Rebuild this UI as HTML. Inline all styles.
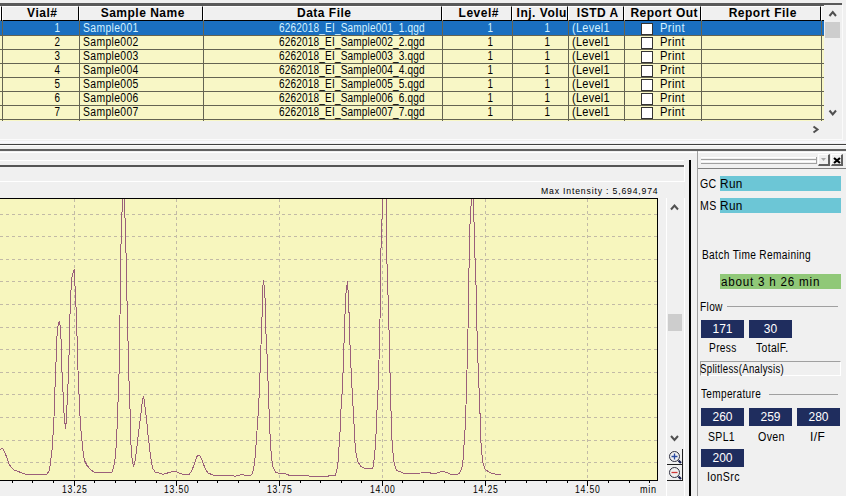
<!DOCTYPE html><html><head><meta charset="utf-8"><style>
*{margin:0;padding:0;box-sizing:border-box}
html,body{width:846px;height:496px;overflow:hidden;background:#f0f0f0;font-family:"Liberation Sans",sans-serif;font-size:12px;color:#000}
.abs{position:absolute}
.t{position:absolute;white-space:pre;line-height:14px}
.hd{position:absolute;top:6px;height:15px;background:#f0f0f0;border-left:1px solid #fff;border-top:1px solid #fff;border-right:1px solid #000;border-bottom:1px solid #000;font-weight:bold;text-align:center;line-height:12px;white-space:pre;overflow:hidden;letter-spacing:0.5px;text-indent:3.5px}
.row{position:absolute;left:0;width:823px;height:14px}
.vl{position:absolute;width:1px;background:#646452}
.hl{position:absolute;height:1px;background:#646452}
.navy{position:absolute;background:#1f2d5e;color:#fff;text-align:center;line-height:18px;height:18px;width:43px}
.lbl{position:absolute;white-space:pre;text-align:center}
</style></head><body>

<div class="abs" style="left:0;top:0;width:842px;height:3px;background:#f0f0f0"></div>
<div class="abs" style="left:0;top:3px;width:842px;height:3px;background:#5a5a5a"></div>
<div class="hd" style="left:0px;width:2px"></div>
<div class="hd" style="left:2px;width:77px">Vial#</div>
<div class="hd" style="left:79px;width:124px">Sample Name</div>
<div class="hd" style="left:203px;width:239px">Data File</div>
<div class="hd" style="left:442px;width:70px">Level#</div>
<div class="hd" style="left:512px;width:56px">Inj. Volu</div>
<div class="hd" style="left:568px;width:56px">ISTD A</div>
<div class="hd" style="left:624px;width:77px">Report Out</div>
<div class="hd" style="left:701px;width:120px">Report File</div>
<div class="abs" style="left:821px;top:6px;width:3px;height:15px;background:#f0f0f0;border-left:1px solid #fff;border-top:1px solid #fff;border-bottom:1px solid #000"></div>
<div class="abs" style="left:0;top:21px;width:824px;height:14px;background:#1a6fc0"></div>
<div class="abs" style="left:0;top:35px;width:824px;height:86px;background:#f8f7c6"></div>
<div class="hl" style="left:0;top:35px;width:824px"></div>
<div class="hl" style="left:0;top:49px;width:824px"></div>
<div class="hl" style="left:0;top:63px;width:824px"></div>
<div class="hl" style="left:0;top:77px;width:824px"></div>
<div class="hl" style="left:0;top:91px;width:824px"></div>
<div class="hl" style="left:0;top:105px;width:824px"></div>
<div class="hl" style="left:0;top:119px;width:824px"></div>
<div class="vl" style="left:2px;top:21px;height:100px"></div>
<div class="vl" style="left:79px;top:21px;height:100px"></div>
<div class="vl" style="left:203px;top:21px;height:100px"></div>
<div class="vl" style="left:442px;top:21px;height:100px"></div>
<div class="vl" style="left:512px;top:21px;height:100px"></div>
<div class="vl" style="left:568px;top:21px;height:100px"></div>
<div class="vl" style="left:624px;top:21px;height:100px"></div>
<div class="vl" style="left:701px;top:21px;height:100px"></div>
<div class="vl" style="left:821px;top:21px;height:100px"></div>
<div class="t" style="left:0;width:60px;text-align:right;top:21px;color:#d4f2ff;transform:scaleX(0.82);transform-origin:59.5px 0">1</div>
<div class="t" style="left:82.63px;top:21px;color:#d4f2ff;font-size:12px;font-weight:400;letter-spacing:0.4px;transform:scaleX(0.8651);transform-origin:0 0;">Sample001</div>
<div class="t" style="left:278.76px;top:21px;color:#d4f2ff;font-size:12px;font-weight:400;letter-spacing:0.2px;transform:scaleX(0.8378);transform-origin:0 0;">6262018_EI_Sample001_1.qgd</div>
<div class="t" style="left:441px;width:52px;text-align:right;top:21px;color:#d4f2ff;transform:scaleX(0.82);transform-origin:51.5px 0">1</div>
<div class="t" style="left:512px;width:38px;text-align:right;top:21px;color:#d4f2ff;transform:scaleX(0.82);transform-origin:37.5px 0">1</div>
<div class="t" style="left:572.09px;top:21px;color:#d4f2ff;font-size:12px;font-weight:400;letter-spacing:0.3px;transform:scaleX(0.9125);transform-origin:0 0;">(Level1</div>
<div class="abs" style="left:641px;top:23px;width:12px;height:12px;background:#fff;border:1px solid #333"></div>
<div class="t" style="left:659.67px;top:21px;color:#d4f2ff;font-size:12px;font-weight:400;letter-spacing:0.4px;transform:scaleX(0.9320);transform-origin:0 0;">Print</div>
<div class="t" style="left:0;width:60px;text-align:right;top:35px;color:#000;transform:scaleX(0.82);transform-origin:59.5px 0">2</div>
<div class="t" style="left:82.63px;top:35px;color:#000;font-size:12px;font-weight:400;letter-spacing:0.4px;transform:scaleX(0.8651);transform-origin:0 0;">Sample002</div>
<div class="t" style="left:278.76px;top:35px;color:#000;font-size:12px;font-weight:400;letter-spacing:0.2px;transform:scaleX(0.8378);transform-origin:0 0;">6262018_EI_Sample002_2.qgd</div>
<div class="t" style="left:441px;width:52px;text-align:right;top:35px;color:#000;transform:scaleX(0.82);transform-origin:51.5px 0">1</div>
<div class="t" style="left:512px;width:38px;text-align:right;top:35px;color:#000;transform:scaleX(0.82);transform-origin:37.5px 0">1</div>
<div class="t" style="left:572.09px;top:35px;color:#000;font-size:12px;font-weight:400;letter-spacing:0.3px;transform:scaleX(0.9125);transform-origin:0 0;">(Level1</div>
<div class="abs" style="left:641px;top:37px;width:12px;height:12px;background:#fff;border:1px solid #333"></div>
<div class="t" style="left:659.67px;top:35px;color:#000;font-size:12px;font-weight:400;letter-spacing:0.4px;transform:scaleX(0.9320);transform-origin:0 0;">Print</div>
<div class="t" style="left:0;width:60px;text-align:right;top:49px;color:#000;transform:scaleX(0.82);transform-origin:59.5px 0">3</div>
<div class="t" style="left:82.63px;top:49px;color:#000;font-size:12px;font-weight:400;letter-spacing:0.4px;transform:scaleX(0.8651);transform-origin:0 0;">Sample003</div>
<div class="t" style="left:278.76px;top:49px;color:#000;font-size:12px;font-weight:400;letter-spacing:0.2px;transform:scaleX(0.8378);transform-origin:0 0;">6262018_EI_Sample003_3.qgd</div>
<div class="t" style="left:441px;width:52px;text-align:right;top:49px;color:#000;transform:scaleX(0.82);transform-origin:51.5px 0">1</div>
<div class="t" style="left:512px;width:38px;text-align:right;top:49px;color:#000;transform:scaleX(0.82);transform-origin:37.5px 0">1</div>
<div class="t" style="left:572.09px;top:49px;color:#000;font-size:12px;font-weight:400;letter-spacing:0.3px;transform:scaleX(0.9125);transform-origin:0 0;">(Level1</div>
<div class="abs" style="left:641px;top:51px;width:12px;height:12px;background:#fff;border:1px solid #333"></div>
<div class="t" style="left:659.67px;top:49px;color:#000;font-size:12px;font-weight:400;letter-spacing:0.4px;transform:scaleX(0.9320);transform-origin:0 0;">Print</div>
<div class="t" style="left:0;width:60px;text-align:right;top:63px;color:#000;transform:scaleX(0.82);transform-origin:59.5px 0">4</div>
<div class="t" style="left:82.63px;top:63px;color:#000;font-size:12px;font-weight:400;letter-spacing:0.4px;transform:scaleX(0.8651);transform-origin:0 0;">Sample004</div>
<div class="t" style="left:278.76px;top:63px;color:#000;font-size:12px;font-weight:400;letter-spacing:0.2px;transform:scaleX(0.8378);transform-origin:0 0;">6262018_EI_Sample004_4.qgd</div>
<div class="t" style="left:441px;width:52px;text-align:right;top:63px;color:#000;transform:scaleX(0.82);transform-origin:51.5px 0">1</div>
<div class="t" style="left:512px;width:38px;text-align:right;top:63px;color:#000;transform:scaleX(0.82);transform-origin:37.5px 0">1</div>
<div class="t" style="left:572.09px;top:63px;color:#000;font-size:12px;font-weight:400;letter-spacing:0.3px;transform:scaleX(0.9125);transform-origin:0 0;">(Level1</div>
<div class="abs" style="left:641px;top:65px;width:12px;height:12px;background:#fff;border:1px solid #333"></div>
<div class="t" style="left:659.67px;top:63px;color:#000;font-size:12px;font-weight:400;letter-spacing:0.4px;transform:scaleX(0.9320);transform-origin:0 0;">Print</div>
<div class="t" style="left:0;width:60px;text-align:right;top:77px;color:#000;transform:scaleX(0.82);transform-origin:59.5px 0">5</div>
<div class="t" style="left:82.63px;top:77px;color:#000;font-size:12px;font-weight:400;letter-spacing:0.4px;transform:scaleX(0.8651);transform-origin:0 0;">Sample005</div>
<div class="t" style="left:278.76px;top:77px;color:#000;font-size:12px;font-weight:400;letter-spacing:0.2px;transform:scaleX(0.8378);transform-origin:0 0;">6262018_EI_Sample005_5.qgd</div>
<div class="t" style="left:441px;width:52px;text-align:right;top:77px;color:#000;transform:scaleX(0.82);transform-origin:51.5px 0">1</div>
<div class="t" style="left:512px;width:38px;text-align:right;top:77px;color:#000;transform:scaleX(0.82);transform-origin:37.5px 0">1</div>
<div class="t" style="left:572.09px;top:77px;color:#000;font-size:12px;font-weight:400;letter-spacing:0.3px;transform:scaleX(0.9125);transform-origin:0 0;">(Level1</div>
<div class="abs" style="left:641px;top:79px;width:12px;height:12px;background:#fff;border:1px solid #333"></div>
<div class="t" style="left:659.67px;top:77px;color:#000;font-size:12px;font-weight:400;letter-spacing:0.4px;transform:scaleX(0.9320);transform-origin:0 0;">Print</div>
<div class="t" style="left:0;width:60px;text-align:right;top:91px;color:#000;transform:scaleX(0.82);transform-origin:59.5px 0">6</div>
<div class="t" style="left:82.63px;top:91px;color:#000;font-size:12px;font-weight:400;letter-spacing:0.4px;transform:scaleX(0.8651);transform-origin:0 0;">Sample006</div>
<div class="t" style="left:278.76px;top:91px;color:#000;font-size:12px;font-weight:400;letter-spacing:0.2px;transform:scaleX(0.8378);transform-origin:0 0;">6262018_EI_Sample006_6.qgd</div>
<div class="t" style="left:441px;width:52px;text-align:right;top:91px;color:#000;transform:scaleX(0.82);transform-origin:51.5px 0">1</div>
<div class="t" style="left:512px;width:38px;text-align:right;top:91px;color:#000;transform:scaleX(0.82);transform-origin:37.5px 0">1</div>
<div class="t" style="left:572.09px;top:91px;color:#000;font-size:12px;font-weight:400;letter-spacing:0.3px;transform:scaleX(0.9125);transform-origin:0 0;">(Level1</div>
<div class="abs" style="left:641px;top:93px;width:12px;height:12px;background:#fff;border:1px solid #333"></div>
<div class="t" style="left:659.67px;top:91px;color:#000;font-size:12px;font-weight:400;letter-spacing:0.4px;transform:scaleX(0.9320);transform-origin:0 0;">Print</div>
<div class="t" style="left:0;width:60px;text-align:right;top:105px;color:#000;transform:scaleX(0.82);transform-origin:59.5px 0">7</div>
<div class="t" style="left:82.63px;top:105px;color:#000;font-size:12px;font-weight:400;letter-spacing:0.4px;transform:scaleX(0.8651);transform-origin:0 0;">Sample007</div>
<div class="t" style="left:278.76px;top:105px;color:#000;font-size:12px;font-weight:400;letter-spacing:0.2px;transform:scaleX(0.8378);transform-origin:0 0;">6262018_EI_Sample007_7.qgd</div>
<div class="t" style="left:441px;width:52px;text-align:right;top:105px;color:#000;transform:scaleX(0.82);transform-origin:51.5px 0">1</div>
<div class="t" style="left:512px;width:38px;text-align:right;top:105px;color:#000;transform:scaleX(0.82);transform-origin:37.5px 0">1</div>
<div class="t" style="left:572.09px;top:105px;color:#000;font-size:12px;font-weight:400;letter-spacing:0.3px;transform:scaleX(0.9125);transform-origin:0 0;">(Level1</div>
<div class="abs" style="left:641px;top:107px;width:12px;height:12px;background:#fff;border:1px solid #333"></div>
<div class="t" style="left:659.67px;top:105px;color:#000;font-size:12px;font-weight:400;letter-spacing:0.4px;transform:scaleX(0.9320);transform-origin:0 0;">Print</div>
<div class="abs" style="left:824px;top:5px;width:18px;height:116px;background:#f0f0f0"></div>
<div class="abs" style="left:825px;top:22px;width:15px;height:16px;background:#cdcdcd"></div>
<svg class="abs" style="left:0;top:0" width="846" height="496"><polyline points="829.5,16 832.75,12 836,16" fill="none" stroke="#505050" stroke-width="2"/><polyline points="829.5,110.5 832.75,114.5 836,110.5" fill="none" stroke="#505050" stroke-width="2"/><polyline points="813.5,126.5 817.5,129.5 813.5,132.5" fill="none" stroke="#505050" stroke-width="2"/><polyline points="671,209.5 674.5,205.5 678,209.5" fill="none" stroke="#505050" stroke-width="2"/><polyline points="671,436 674.5,440 678,436" fill="none" stroke="#505050" stroke-width="2"/></svg>
<div class="abs" style="left:0;top:139px;width:843px;height:1px;background:#fbfbfb"></div>
<div class="abs" style="left:842px;top:5px;width:1px;height:135px;background:#fbfbfb"></div>
<div class="abs" style="left:0;top:141px;width:846px;height:2px;background:#f8f8fc"></div>
<div class="abs" style="left:0;top:145px;width:846px;height:1px;background:#fcfcfc"></div>
<div class="abs" style="left:0;top:144px;width:846px;height:1px;background:#404040"></div>
<div class="abs" style="left:0;top:149px;width:846px;height:2px;background:#606060"></div>
<div class="abs" style="left:0;top:152px;width:846px;height:1px;background:#fff"></div>
<div class="abs" style="left:0;top:160px;width:684px;height:1px;background:#fff"></div>
<div class="abs" style="left:0;top:165px;width:684px;height:2px;background:#555"></div>
<div class="abs" style="left:0;top:181px;width:684px;height:1px;background:#fff"></div>
<div class="abs" style="left:684px;top:165px;width:1px;height:17px;background:#fff"></div>
<div class="abs" style="left:689px;top:160px;width:2px;height:336px;background:#000"></div>
<div class="abs" style="left:697px;top:151px;width:1px;height:345px;background:#a0a0a0"></div>
<svg class="abs" style="left:0;top:0" width="846" height="496" viewBox="0 0 846 496"><rect x="0" y="198" width="658" height="283" fill="#f7f6be"/><line x1="0" y1="214.5" x2="657" y2="214.5" stroke="#c2baa6" stroke-width="1" stroke-dasharray="3 3" shape-rendering="crispEdges"/><line x1="0" y1="236.5" x2="657" y2="236.5" stroke="#c2baa6" stroke-width="1" stroke-dasharray="3 3" shape-rendering="crispEdges"/><line x1="0" y1="259.5" x2="657" y2="259.5" stroke="#c2baa6" stroke-width="1" stroke-dasharray="3 3" shape-rendering="crispEdges"/><line x1="0" y1="281.5" x2="657" y2="281.5" stroke="#c2baa6" stroke-width="1" stroke-dasharray="3 3" shape-rendering="crispEdges"/><line x1="0" y1="304.5" x2="657" y2="304.5" stroke="#c2baa6" stroke-width="1" stroke-dasharray="3 3" shape-rendering="crispEdges"/><line x1="0" y1="327.5" x2="657" y2="327.5" stroke="#c2baa6" stroke-width="1" stroke-dasharray="3 3" shape-rendering="crispEdges"/><line x1="0" y1="349.5" x2="657" y2="349.5" stroke="#c2baa6" stroke-width="1" stroke-dasharray="3 3" shape-rendering="crispEdges"/><line x1="0" y1="372.5" x2="657" y2="372.5" stroke="#c2baa6" stroke-width="1" stroke-dasharray="3 3" shape-rendering="crispEdges"/><line x1="0" y1="394.5" x2="657" y2="394.5" stroke="#c2baa6" stroke-width="1" stroke-dasharray="3 3" shape-rendering="crispEdges"/><line x1="0" y1="417.5" x2="657" y2="417.5" stroke="#c2baa6" stroke-width="1" stroke-dasharray="3 3" shape-rendering="crispEdges"/><line x1="0" y1="440.5" x2="657" y2="440.5" stroke="#c2baa6" stroke-width="1" stroke-dasharray="3 3" shape-rendering="crispEdges"/><line x1="0" y1="462.5" x2="657" y2="462.5" stroke="#c2baa6" stroke-width="1" stroke-dasharray="3 3" shape-rendering="crispEdges"/><line x1="74.5" y1="199" x2="74.5" y2="480" stroke="#c2baa6" stroke-width="1" stroke-dasharray="3 3" shape-rendering="crispEdges"/><line x1="176.5" y1="199" x2="176.5" y2="480" stroke="#c2baa6" stroke-width="1" stroke-dasharray="3 3" shape-rendering="crispEdges"/><line x1="279.5" y1="199" x2="279.5" y2="480" stroke="#c2baa6" stroke-width="1" stroke-dasharray="3 3" shape-rendering="crispEdges"/><line x1="382.5" y1="199" x2="382.5" y2="480" stroke="#c2baa6" stroke-width="1" stroke-dasharray="3 3" shape-rendering="crispEdges"/><line x1="485.5" y1="199" x2="485.5" y2="480" stroke="#c2baa6" stroke-width="1" stroke-dasharray="3 3" shape-rendering="crispEdges"/><line x1="587.5" y1="199" x2="587.5" y2="480" stroke="#c2baa6" stroke-width="1" stroke-dasharray="3 3" shape-rendering="crispEdges"/><polyline points="0,449.6 1.8,448.4 3,449 4.8,452.6 7.3,458.7 9.1,464 11.5,467.8 14.5,470.2 18.1,471.4 22.4,473.2 26.6,474.4 36.3,474.7 44.7,475 47.2,473.8 49,470.8 50.2,464.7 51,458 52,450 53,435 54,417 54.5,400 55.3,380 56.3,355 57.3,329 59.4,321 60.7,330 61.3,348 61.4,360 62.4,380 63.4,400 63.6,410 64.8,420 65.3,428.6 66.4,422 67.2,400 68.2,380 69.2,350 69.4,328 70.2,310 70.7,300 71.4,279 72.4,276 73.4,271.7 74.5,269.2 74.7,275 74.7,282 75.4,290 76.5,320 77.3,345 77.5,360 78.5,380 79.4,405 80.5,425 81.7,438 82.9,450 83.5,455 84.7,461 87.1,465.7 90.7,469.5 94.3,472.5 98,472.8 111.9,472.5 113.7,467 114.9,460 116.1,447 116.6,435 117.6,420 117.6,410 118.6,390 119.5,355 119.5,330 120.5,300 120.5,270 121.1,240 121.7,215 122.7,205 122.7,198 124.2,198 124.2,208 125.2,220 126.2,260 126.8,295 127.6,320 128.6,370 129.7,400 130.7,430 131,445 132.2,460 133.5,466.5 135.3,460 137.1,445 138.9,430 139.5,425 140.2,420 141.3,410 142.3,401.6 143.5,396 144.3,401 145.3,409 146.3,418 147.3,427 148,435 149.2,445 150.4,455 151.6,463 152.8,468.5 155.2,472 159.4,473 163,474.2 167.9,472.9 172.7,471.5 176.4,471.5 180,473.5 184.8,474.5 188.6,474.8 191,472 194.1,465 196.5,457 198.3,455 199.5,455 201.9,460 205,468 208,473 211.6,474.5 215.2,475.5 233.4,475.5 234.6,476.5 240.6,474.7 241.8,474.3 245.4,475.5 250.9,475.5 252.7,473 254.2,465 255.4,455 256.3,440 257.8,420 259.2,395 260.5,360 261.5,330 262.7,300 262.7,290 263.4,280 264.2,287 265,298 265,321 266.5,340 267.6,370 268.5,395 269.4,420 270.5,445 271.8,460 273,467 275.4,472 279,473.5 284.5,473.5 289.9,475.5 328,476.5 329.3,475.2 335.2,475.3 336.5,472 337.8,465 338.8,450 339.5,440 340.8,420 341.1,405 342.4,390 343.5,360 344.4,330 345.4,305 345.4,296 346.5,291 347.4,281.3 348,289.6 348.9,309 349.6,331 350,345 351.1,370 352.4,395 353.5,415 354.4,430 355.1,445 356.3,455 358.1,462 360.4,466 364.9,468.7 372.5,468.7 373.5,465 375,450 376.3,430 377,410 378.5,380 379.5,340 380.7,290 380.7,260 381.5,230 382.7,205 382.7,198 386.2,198 386.2,236 387.2,270 388.8,320 389.8,365 390.8,400 391.4,430 392.6,450 394.4,465 396.6,470 398.3,471 403.9,473.2 421.6,473 423.9,472.2 430.5,473 437.2,473 442.7,471.3 447.2,472.5 450.5,474.3 456,475 459.4,473 461.6,469 462.9,462 463.6,450 464.5,440 465.5,420 466.5,390 467.5,350 468.7,300 469.1,260 470.1,220 471.1,205 471.1,198 473.1,198 473.1,209 474.2,225 475.2,265 476.2,290 476.6,310 477.2,340 478.6,380 479.6,400 480.8,440 481.6,451 482.8,462.6 485.2,469.7 490.3,472.7 495.3,474.2 501.4,474.5" fill="none" stroke="#9a5f7a" stroke-width="1" shape-rendering="crispEdges"/><line x1="0" y1="198.5" x2="658" y2="198.5" stroke="#000" stroke-width="1"/><line x1="657.5" y1="198" x2="657.5" y2="481" stroke="#000" stroke-width="1"/><line x1="0" y1="480.5" x2="658" y2="480.5" stroke="#000" stroke-width="1"/><line x1="12.5" y1="480" x2="12.5" y2="483" stroke="#000" stroke-width="1" shape-rendering="crispEdges"/><line x1="32.5" y1="480" x2="32.5" y2="483" stroke="#000" stroke-width="1" shape-rendering="crispEdges"/><line x1="53.5" y1="480" x2="53.5" y2="483" stroke="#000" stroke-width="1" shape-rendering="crispEdges"/><line x1="74.5" y1="480" x2="74.5" y2="486" stroke="#000" stroke-width="1" shape-rendering="crispEdges"/><line x1="94.5" y1="480" x2="94.5" y2="483" stroke="#000" stroke-width="1" shape-rendering="crispEdges"/><line x1="115.5" y1="480" x2="115.5" y2="483" stroke="#000" stroke-width="1" shape-rendering="crispEdges"/><line x1="135.5" y1="480" x2="135.5" y2="483" stroke="#000" stroke-width="1" shape-rendering="crispEdges"/><line x1="156.5" y1="480" x2="156.5" y2="483" stroke="#000" stroke-width="1" shape-rendering="crispEdges"/><line x1="176.5" y1="480" x2="176.5" y2="486" stroke="#000" stroke-width="1" shape-rendering="crispEdges"/><line x1="197.5" y1="480" x2="197.5" y2="483" stroke="#000" stroke-width="1" shape-rendering="crispEdges"/><line x1="217.5" y1="480" x2="217.5" y2="483" stroke="#000" stroke-width="1" shape-rendering="crispEdges"/><line x1="238.5" y1="480" x2="238.5" y2="483" stroke="#000" stroke-width="1" shape-rendering="crispEdges"/><line x1="259.5" y1="480" x2="259.5" y2="483" stroke="#000" stroke-width="1" shape-rendering="crispEdges"/><line x1="279.5" y1="480" x2="279.5" y2="486" stroke="#000" stroke-width="1" shape-rendering="crispEdges"/><line x1="300.5" y1="480" x2="300.5" y2="483" stroke="#000" stroke-width="1" shape-rendering="crispEdges"/><line x1="320.5" y1="480" x2="320.5" y2="483" stroke="#000" stroke-width="1" shape-rendering="crispEdges"/><line x1="341.5" y1="480" x2="341.5" y2="483" stroke="#000" stroke-width="1" shape-rendering="crispEdges"/><line x1="361.5" y1="480" x2="361.5" y2="483" stroke="#000" stroke-width="1" shape-rendering="crispEdges"/><line x1="382.5" y1="480" x2="382.5" y2="486" stroke="#000" stroke-width="1" shape-rendering="crispEdges"/><line x1="402.5" y1="480" x2="402.5" y2="483" stroke="#000" stroke-width="1" shape-rendering="crispEdges"/><line x1="423.5" y1="480" x2="423.5" y2="483" stroke="#000" stroke-width="1" shape-rendering="crispEdges"/><line x1="444.5" y1="480" x2="444.5" y2="483" stroke="#000" stroke-width="1" shape-rendering="crispEdges"/><line x1="464.5" y1="480" x2="464.5" y2="483" stroke="#000" stroke-width="1" shape-rendering="crispEdges"/><line x1="485.5" y1="480" x2="485.5" y2="486" stroke="#000" stroke-width="1" shape-rendering="crispEdges"/><line x1="505.5" y1="480" x2="505.5" y2="483" stroke="#000" stroke-width="1" shape-rendering="crispEdges"/><line x1="526.5" y1="480" x2="526.5" y2="483" stroke="#000" stroke-width="1" shape-rendering="crispEdges"/><line x1="546.5" y1="480" x2="546.5" y2="483" stroke="#000" stroke-width="1" shape-rendering="crispEdges"/><line x1="567.5" y1="480" x2="567.5" y2="483" stroke="#000" stroke-width="1" shape-rendering="crispEdges"/><line x1="587.5" y1="480" x2="587.5" y2="486" stroke="#000" stroke-width="1" shape-rendering="crispEdges"/><line x1="608.5" y1="480" x2="608.5" y2="483" stroke="#000" stroke-width="1" shape-rendering="crispEdges"/><line x1="629.5" y1="480" x2="629.5" y2="483" stroke="#000" stroke-width="1" shape-rendering="crispEdges"/><line x1="649.5" y1="480" x2="649.5" y2="483" stroke="#000" stroke-width="1" shape-rendering="crispEdges"/></svg>
<div class="t" style="left:61.58px;top:482px;color:#000;font-size:10.5px;font-weight:400;letter-spacing:1.0px;transform:scaleX(0.8207);transform-origin:0 0;">13.25</div>
<div class="t" style="left:163.58px;top:482px;color:#000;font-size:10.5px;font-weight:400;letter-spacing:1.0px;transform:scaleX(0.8207);transform-origin:0 0;">13.50</div>
<div class="t" style="left:266.58px;top:482px;color:#000;font-size:10.5px;font-weight:400;letter-spacing:1.0px;transform:scaleX(0.8207);transform-origin:0 0;">13.75</div>
<div class="t" style="left:369.58px;top:482px;color:#000;font-size:10.5px;font-weight:400;letter-spacing:1.0px;transform:scaleX(0.8207);transform-origin:0 0;">14.00</div>
<div class="t" style="left:472.58px;top:482px;color:#000;font-size:10.5px;font-weight:400;letter-spacing:1.0px;transform:scaleX(0.8207);transform-origin:0 0;">14.25</div>
<div class="t" style="left:574.58px;top:482px;color:#000;font-size:10.5px;font-weight:400;letter-spacing:1.0px;transform:scaleX(0.8207);transform-origin:0 0;">14.50</div>
<div class="t" style="left:639.94px;top:482px;color:#000;font-size:10.5px;font-weight:400;letter-spacing:0.8px;transform:scaleX(0.8647);transform-origin:0 0;">min</div>
<div class="t" style="left:540.99px;top:184px;color:#000;font-size:9.5px;font-weight:400;letter-spacing:0.9px;transform:scaleX(0.9135);transform-origin:0 0;">Max Intensity : 5,694,974</div>
<div class="abs" style="left:666px;top:198px;width:1px;height:298px;background:#fff"></div>
<div class="abs" style="left:684px;top:198px;width:1px;height:298px;background:#fff"></div>
<div class="abs" style="left:668px;top:314px;width:14px;height:17px;background:#cdcdcd"></div>
<div class="abs" style="left:667px;top:464px;width:16px;height:1px;background:#202020"></div>
<div class="abs" style="left:667px;top:480px;width:16px;height:1px;background:#202020"></div>
<div class="abs" style="left:682px;top:449px;width:1px;height:32px;background:#202020"></div>
<svg class="abs" style="left:0;top:0" width="846" height="496"><circle cx="674.5" cy="456.5" r="5" fill="none" stroke="#303040" stroke-width="1"/><path d="M671.5,456.5 H677.5 M674.5,453.5 V459.5" stroke="#2a4aa0" stroke-width="1.3"/><path d="M678.5,460.5 L681,463" stroke="#1a2050" stroke-width="2.2"/><circle cx="674.5" cy="472.5" r="5" fill="none" stroke="#303040" stroke-width="1"/><path d="M671.5,472.5 H677.5" stroke="#d03838" stroke-width="1.3"/><path d="M678.5,476.5 L681,479" stroke="#1a2050" stroke-width="2.2"/></svg>
<div class="abs" style="left:701px;top:157px;width:116px;height:1px;background:#fff"></div>
<div class="abs" style="left:701px;top:159px;width:116px;height:1px;background:#a0a0a0"></div>
<div class="abs" style="left:701px;top:161px;width:116px;height:1px;background:#fff"></div>
<div class="abs" style="left:701px;top:163px;width:116px;height:1px;background:#a0a0a0"></div>
<div class="abs" style="left:816px;top:157px;width:1px;height:7px;background:#a0a0a0"></div>
<div class="abs" style="left:818px;top:154px;width:12px;height:12px;background:#f0f0f0;border-style:solid;border-width:1px 2px 2px 1px;border-color:#fff #606060 #606060 #fff"></div>
<svg class="abs" style="left:0;top:0" width="846" height="496"><polygon points="821,158 826,158 823.5,161" fill="#a8a8a8"/><path d="M834,158 L840,163 M840,158 L834,163" stroke="#000" stroke-width="2.2"/></svg>
<div class="abs" style="left:831px;top:154px;width:12px;height:12px;border-style:solid;border-width:1px 2px 2px 1px;border-color:#fff #606060 #606060 #fff"></div>
<div class="abs" style="left:698px;top:168px;width:148px;height:1px;background:#808080"></div>
<div class="t" style="left:699.62px;top:177px;color:#000;font-size:12px;font-weight:400;letter-spacing:0.4px;transform:scaleX(0.8824);transform-origin:0 0;">GC</div>
<div class="abs" style="left:720px;top:176px;width:121px;height:15px;background:#6cc6d6"></div>
<div class="t" style="left:720.42px;top:177px;color:#000;font-size:12px;font-weight:400;letter-spacing:0.4px;transform:scaleX(0.9810);transform-origin:0 0;">Run</div>
<div class="t" style="left:699.62px;top:199px;color:#000;font-size:12px;font-weight:400;letter-spacing:0.4px;transform:scaleX(0.8824);transform-origin:0 0;">MS</div>
<div class="abs" style="left:720px;top:198px;width:121px;height:15px;background:#6cc6d6"></div>
<div class="t" style="left:720.42px;top:199px;color:#000;font-size:12px;font-weight:400;letter-spacing:0.4px;transform:scaleX(0.9810);transform-origin:0 0;">Run</div>
<div class="t" style="left:701.65px;top:248px;color:#000;font-size:12px;font-weight:400;letter-spacing:0.4px;transform:scaleX(0.8465);transform-origin:0 0;">Batch Time Remaining</div>
<div class="abs" style="left:720px;top:274px;width:121px;height:15px;background:#90c878"></div>
<div class="t" style="left:720.50px;top:275px;color:#000;font-size:12px;font-weight:400;letter-spacing:0.8px;transform:scaleX(0.9703);transform-origin:0 0;">about 3 h 26 min</div>
<div class="t" style="left:699.65px;top:300px;color:#000;font-size:12px;font-weight:400;letter-spacing:0.4px;transform:scaleX(0.8462);transform-origin:0 0;">Flow</div>
<div class="abs" style="left:727px;top:306px;width:111px;height:1px;background:#a0a0a0"></div>
<div class="navy" style="left:701px;top:320px">171</div>
<div class="navy" style="left:749px;top:320px">30</div>
<div class="t" style="left:708.55px;top:341px;color:#000;font-size:12px;font-weight:400;letter-spacing:0.4px;transform:scaleX(0.8484);transform-origin:0 0;">Press</div>
<div class="t" style="left:755.50px;top:341px;color:#000;font-size:12px;font-weight:400;letter-spacing:0.4px;transform:scaleX(0.8694);transform-origin:0 0;">TotalF.</div>
<div class="abs" style="left:700px;top:361px;width:141px;height:15px;border:1px solid;border-color:#a0a0a0 #fff #fff #a0a0a0"></div>
<div class="t" style="left:700.20px;top:362px;color:#000;font-size:12px;font-weight:400;letter-spacing:0.4px;transform:scaleX(0.8010);transform-origin:0 0;">Splitless(Analysis)</div>
<div class="t" style="left:701.20px;top:387px;color:#000;font-size:12px;font-weight:400;letter-spacing:0.4px;transform:scaleX(0.8380);transform-origin:0 0;">Temperature</div>
<div class="abs" style="left:769px;top:394px;width:69px;height:1px;background:#a0a0a0"></div>
<div class="navy" style="left:701px;top:408px">260</div>
<div class="navy" style="left:749px;top:408px">259</div>
<div class="navy" style="left:797px;top:408px">280</div>
<div class="t" style="left:708.33px;top:430px;color:#000;font-size:12px;font-weight:400;letter-spacing:0.4px;transform:scaleX(0.8724);transform-origin:0 0;">SPL1</div>
<div class="t" style="left:757.80px;top:430px;color:#000;font-size:12px;font-weight:400;letter-spacing:0.4px;transform:scaleX(0.8862);transform-origin:0 0;">Oven</div>
<div class="t" style="left:810.11px;top:430px;color:#000;font-size:12px;font-weight:400;letter-spacing:0.4px;transform:scaleX(0.9929);transform-origin:0 0;">I/F</div>
<div class="navy" style="left:701px;top:449px">200</div>
<div class="t" style="left:706.61px;top:470px;color:#000;font-size:12px;font-weight:400;letter-spacing:0.4px;transform:scaleX(0.8857);transform-origin:0 0;">IonSrc</div>
</body></html>
